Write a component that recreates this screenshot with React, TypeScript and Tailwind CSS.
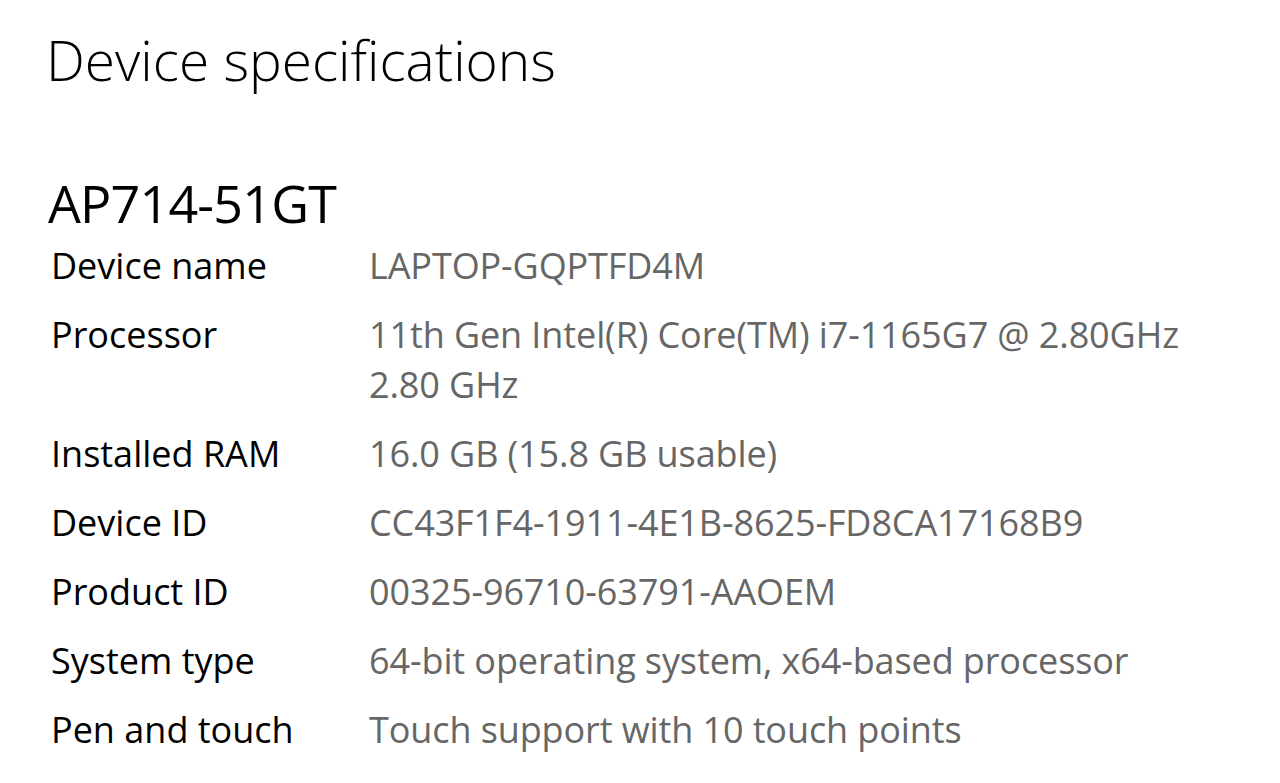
const specs: { label: string; value: string }[] = [
  { label: "Device name", value: "LAPTOP-GQPTFD4M" },
  { label: "Processor", value: "11th Gen Intel(R) Core(TM) i7-1165G7 @ 2.80GHz 2.80 GHz" },
  { label: "Installed RAM", value: "16.0 GB (15.8 GB usable)" },
  { label: "Device ID", value: "CC43F1F4-1911-4E1B-8625-FD8CA17168B9" },
  { label: "Product ID", value: "00325-96710-63791-AAOEM" },
  { label: "System type", value: "64-bit operating system, x64-based processor" },
  { label: "Pen and touch", value: "Touch support with 10 touch points" },
]

export default function App() {
  return (
    <div
      className="min-h-[783px] bg-white text-black"
      style={{ fontFamily: '"Open Sans", "Noto Sans", sans-serif' }}
    >
      <div className="pl-[46px] pt-[25px]">
        <h1 className="text-[55px] leading-[70px] font-light">Device specifications</h1>

        <h2 className="mt-[76px] pl-[2px] text-[52px] leading-[64px] font-normal tracking-[-0.8px]">AP714-51GT</h2>

        <div className="mt-[6px] pl-[5px] flex flex-col gap-[19px]">
          {specs.map((s) => (
            <div key={s.label} className="flex text-[36px] leading-[50px]">
              <div className="w-[318px] shrink-0">{s.label}</div>
              <div className="w-[860px] text-[#666666] tracking-[-0.1px]">{s.value}</div>
            </div>
          ))}
        </div>
      </div>
    </div>
  )
}
